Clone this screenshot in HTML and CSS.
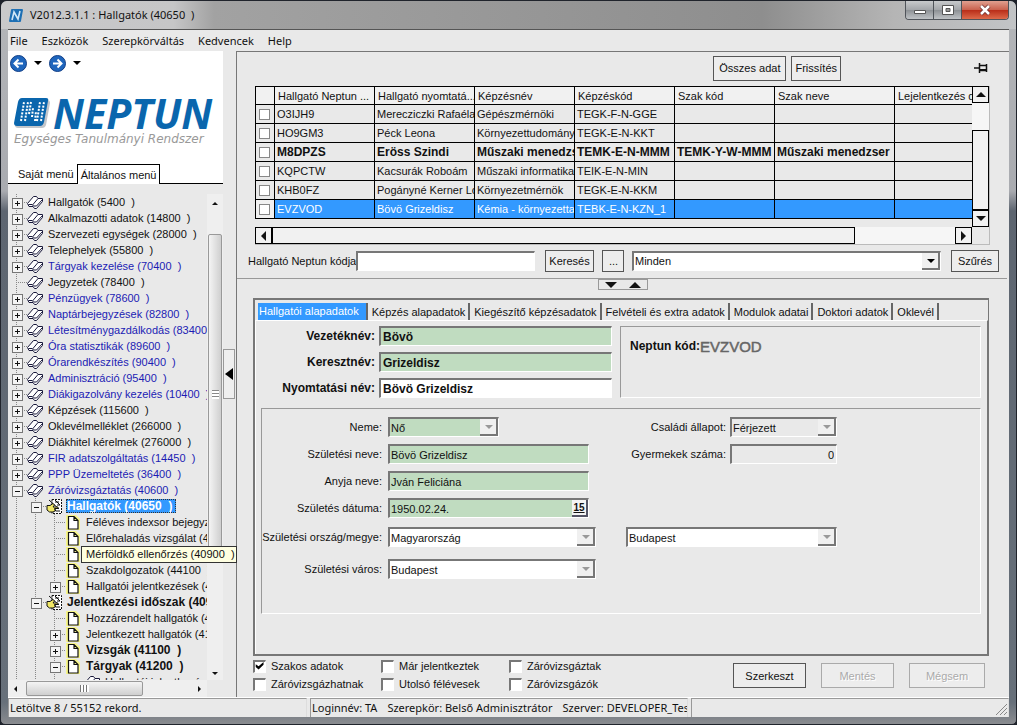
FILE: index.html
```
<!DOCTYPE html>
<html lang="hu">
<head>
<meta charset="utf-8">
<title>V2012.3.1.1 : Hallgatók (40650 )</title>
<link rel="stylesheet" href="styles.css">
</head>
<body>
<svg class="defs" aria-hidden="true">
  <symbol id="book" viewBox="0 0 17 15"><path d="M.5 8.500 6.500 1.500h3.500l1.500 1.500h4.500v3.500L10 13.500H7L5.500 12H2z" fill="#fff"/><path d="M.5 8.500 6.500 1.500h3l1.500 2h4.500v3L9.500 13.500h-2L6 11.500H2zM11 3.500 5.500 10M1.500 9.500H5l1.500 1.500h3L15.500 4.500" fill="none" stroke="#18183a"/></symbol>
  <symbol id="page" viewBox="0 0 17 15"><path d="M1 0h10l4 4v11H1z" fill="#f7f58a"/><path d="M3.500 1.500h5.500l4 4v8.500h-9.500zM9 1.500v4h4" fill="#fff" stroke="#111" stroke-width="1.200"/></symbol>
  <symbol id="hand" viewBox="0 0 17 15"><path d="M6 .5h9.500v14H6z" fill="#fff" stroke="#111" stroke-dasharray="2 1"/><path d="M3 1l10 9M9 3h4M11 6h3M10 12h4M9 1l5 5" stroke="#111"/><path d="M1 6.500h3l3-2 1.500 1.500L7 8h5v1.500H8.500v1h1v1.500H8v1H3.500L1 11z" fill="#f1e866" stroke="#111"/></symbol>
</svg>
<div class="window">
  <header class="titlebar">
    <svg class="app-icon" viewBox="0 0 14 13" aria-hidden="true"><path d="M3 0h10q1 0 1 1l-2 11q0 1-1 1H1q-1 0-1-1L2 1q0-1 1-1z" fill="#1d6fb4"/><path d="M3 11 5 3l4 7 2-8" fill="none" stroke="#cfe6f7" stroke-width="1.600"/></svg>
    <h1 class="title">V2012.3.1.1 : Hallgatók (40650&nbsp; )</h1>
    <div class="window-buttons">
      <button type="button" class="wb" aria-label="Kis méret"><svg viewBox="0 0 14 12"><path d="M1.500 6.500h11v3h-11z" fill="#fff" stroke="#555"/></svg></button>
      <button type="button" class="wb" aria-label="Teljes méret"><svg viewBox="0 0 14 12"><path d="M1.500 1.500h11v9h-11z" fill="#fff" stroke="#555"/><path d="M5 4.500h4v3H5z" fill="#999" stroke="#555"/></svg></button>
      <button type="button" class="wb wb-close" aria-label="Bezárás"><svg viewBox="0 0 14 12"><path d="M3 2l8 8M11 2l-8 8" stroke="#6b3030" stroke-width="4"/><path d="M3 2l8 8M11 2l-8 8" stroke="#fff" stroke-width="2.500"/></svg></button>
    </div>
  </header>
  <div class="client">
    <nav class="menubar">
      <button type="button">File</button><button type="button">Eszközök</button><button type="button">Szerepkörváltás</button><button type="button">Kedvencek</button><button type="button">Help</button>
    </nav>
    <div class="workspace">
      <aside class="sidebar">
        <div class="brand">
          <div class="history">
            <button type="button" class="round" aria-label="Vissza"><svg viewBox="0 0 17 17"><circle cx="8.500" cy="8.500" r="8" fill="#1f66bd" stroke="#123f86"/><path d="M13 8.500H5M8.500 4.500l-4 4 4 4" fill="none" stroke="#fff" stroke-width="2"/></svg></button>
            <span class="caret"></span>
            <button type="button" class="round" aria-label="Előre"><svg viewBox="0 0 17 17"><circle cx="8.500" cy="8.500" r="8" fill="#1f66bd" stroke="#123f86"/><path d="M4 8.500h8M8.500 4.500l4 4-4 4" fill="none" stroke="#fff" stroke-width="2"/></svg></button>
            <span class="caret"></span>
          </div>
          <div class="logo">
            <svg viewBox="0 0 36 32" aria-hidden="true"><path d="M9 3h24q3 0 3 3l-4 22q-1 3-4 3H4q-3 0-3-3L5 6q1-3 4-3z" fill="#c3c6ca"/><path d="M8 1h24q3 0 2 3l-4 21q-1 4-4 4H3q-3 0-3-3L4 5q1-4 4-4z" fill="#0a66ad"/><path d="M7 24l3-19M11 24l3-19M15 17l2-12M18 20l1-9M21 24l1-10M23 24l3-19M27 24l3-19" stroke="#fff" stroke-width="2" stroke-dasharray="2 1.400"/></svg>
            <span class="logo-name">NEPTUN</span>
          </div>
          <div class="logo-sub">Egységes Tanulmányi Rendszer</div>
          <div class="menu-tabs"><button type="button">Saját menü</button><button type="button" class="active">Általános menü</button></div>
        </div>
        <div class="tree-area">
          <ul class="tree">
            <li><i class="g plus"></i><svg><use href="#book"/></svg><span>Hallgatók (5400  )</span></li>
            <li><i class="g plus"></i><svg><use href="#book"/></svg><span>Alkalmazotti adatok (14800  )</span></li>
            <li><i class="g plus"></i><svg><use href="#book"/></svg><span>Szervezeti egységek (28000  )</span></li>
            <li><i class="g plus"></i><svg><use href="#book"/></svg><span>Telephelyek (55800  )</span></li>
            <li class="blue"><i class="g plus"></i><svg><use href="#book"/></svg><span>Tárgyak kezelése (70400  )</span></li>
            <li><i class="g leaf"></i><svg><use href="#book"/></svg><span>Jegyzetek (78400  )</span></li>
            <li class="blue"><i class="g plus"></i><svg><use href="#book"/></svg><span>Pénzügyek (78600  )</span></li>
            <li class="blue"><i class="g plus"></i><svg><use href="#book"/></svg><span>Naptárbejegyzések (82800  )</span></li>
            <li class="blue"><i class="g plus"></i><svg><use href="#book"/></svg><span>Létesítménygazdálkodás (83400</span></li>
            <li class="blue"><i class="g plus"></i><svg><use href="#book"/></svg><span>Óra statisztikák (89600  )</span></li>
            <li class="blue"><i class="g plus"></i><svg><use href="#book"/></svg><span>Órarendkészítés (90400  )</span></li>
            <li class="blue"><i class="g plus"></i><svg><use href="#book"/></svg><span>Adminisztráció (95400  )</span></li>
            <li class="blue"><i class="g plus"></i><svg><use href="#book"/></svg><span>Diákigazolvány kezelés (10400  )</span></li>
            <li><i class="g plus"></i><svg><use href="#book"/></svg><span>Képzések (115600  )</span></li>
            <li><i class="g plus"></i><svg><use href="#book"/></svg><span>Oklevélmelléklet (266000  )</span></li>
            <li><i class="g plus"></i><svg><use href="#book"/></svg><span>Diákhitel kérelmek (276000  )</span></li>
            <li class="blue"><i class="g plus"></i><svg><use href="#book"/></svg><span>FIR adatszolgáltatás (14450  )</span></li>
            <li class="blue"><i class="g plus"></i><svg><use href="#book"/></svg><span>PPP Üzemeltetés (36400  )</span></li>
            <li class="blue"><i class="g minus"></i><svg><use href="#book"/></svg><span>Záróvizsgáztatás (40600  )</span></li>
            <li class="bold selected"><i class="g"></i><i class="g minus"></i><svg><use href="#hand"/></svg><span>Hallgatók (40650  )</span></li>
            <li><i class="g"></i><i class="g"></i><i class="g leaf"></i><svg><use href="#page"/></svg><span>Féléves indexsor bejegyzések</span></li>
            <li><i class="g"></i><i class="g"></i><i class="g leaf"></i><svg><use href="#page"/></svg><span>Előrehaladás vizsgálat (40800  )</span></li>
            <li><i class="g"></i><i class="g"></i><i class="g leaf"></i><svg><use href="#page"/></svg></li>
            <li><i class="g"></i><i class="g"></i><i class="g leaf"></i><svg><use href="#page"/></svg><span>Szakdolgozatok (44100  )</span></li>
            <li><i class="g"></i><i class="g"></i><i class="g plus"></i><svg><use href="#page"/></svg><span>Hallgatói jelentkezések (41000  )</span></li>
            <li class="bold"><i class="g"></i><i class="g minus"></i><svg><use href="#hand"/></svg><span>Jelentkezési időszak (40950  )</span></li>
            <li><i class="g"></i><i class="g"></i><i class="g leaf"></i><svg><use href="#page"/></svg><span>Hozzárendelt hallgatók (41000  )</span></li>
            <li><i class="g"></i><i class="g"></i><i class="g plus"></i><svg><use href="#page"/></svg><span>Jelentkezett hallgatók (41050  )</span></li>
            <li class="bold"><i class="g"></i><i class="g"></i><i class="g plus"></i><svg><use href="#page"/></svg><span>Vizsgák (41100  )</span></li>
            <li class="bold"><i class="g"></i><i class="g"></i><i class="g minus"></i><svg><use href="#page"/></svg><span>Tárgyak (41200  )</span></li>
            <li><i class="g"></i><i class="g"></i><i class="g"></i><i class="g none"></i><svg><use href="#book"/></svg><span>Hallgatói jelentkezések</span></li>
          </ul>
          <div class="vbar"><span class="tri up"></span><span class="thumb"></span><span class="tri down"></span></div>
          <div class="hbar"><span class="tri left"></span><span class="thumb"></span><span class="tri right"></span></div>
        </div>
        <div class="tooltip" role="tooltip">Mérföldkő ellenőrzés (40900  )</div>
      </aside>
      <div class="splitter"><button type="button" aria-label="Menü elrejtése"><span></span></button></div>
      <main class="main">
        <section class="list-pane">
          <div class="toolbar">
            <button type="button" class="btn">Összes adat</button>
            <button type="button" class="btn">Frissítés</button>
            <svg class="pin" viewBox="0 0 14 10" aria-hidden="true"><path d="M0 5h5M5.500 0v10M6 2.500h6M6 7.500h6M12.500 1v8" fill="none" stroke="#111" stroke-width="1.500"/><path d="M6 6h6v2H6z" fill="#111"/></svg>
          </div>
          <div class="grid">
            <div class="grid-view">
              <table>
                <colgroup><col class="c-check"><col class="c"><col class="c"><col class="c"><col class="c"><col class="c"><col class="c-wide"><col class="c"></colgroup>
                <thead><tr><th></th><th>Hallgató Neptun ...</th><th>Hallgató nyomtatá...</th><th>Képzésnév</th><th>Képzéskód</th><th>Szak kód</th><th>Szak neve</th><th>Lejelentkezés dátuma</th></tr></thead>
                <tbody>
                  <tr><td><input type="checkbox" aria-label="O3IJH9"></td><td>O3IJH9</td><td>Merecziczki Rafaéla</td><td>Gépészmérnöki</td><td>TEGK-F-N-GGE</td><td></td><td></td><td></td></tr>
                  <tr><td><input type="checkbox" aria-label="HO9GM3"></td><td>HO9GM3</td><td>Péck Leona</td><td>Környezettudományi</td><td>TEGK-E-N-KKT</td><td></td><td></td><td></td></tr>
                  <tr class="bold"><td><input type="checkbox" aria-label="M8DPZS"></td><td>M8DPZS</td><td>Eröss Szindi</td><td>Műszaki menedzser</td><td>TEMK-E-N-MMM</td><td>TEMK-Y-W-MMM</td><td>Műszaki menedzser</td><td></td></tr>
                  <tr><td><input type="checkbox" aria-label="KQPCTW"></td><td>KQPCTW</td><td>Kacsurák Roboám</td><td>Műszaki informatika</td><td>TEIK-E-N-MIN</td><td></td><td></td><td></td></tr>
                  <tr><td><input type="checkbox" aria-label="KHB0FZ"></td><td>KHB0FZ</td><td>Pogányné Kerner Lori</td><td>Környezetmérnök</td><td>TEGK-E-N-KKM</td><td></td><td></td><td></td></tr>
                  <tr class="current"><td><input type="checkbox" aria-label="EVZVOD"></td><td>EVZVOD</td><td>Bövö Grizeldisz</td><td>Kémia - környezettan</td><td>TEBK-E-N-KZN_1</td><td></td><td></td><td></td></tr>
                </tbody>
              </table>
            </div>
            <div class="gvbar"><span class="cell"><span class="tri up"></span></span><span class="cell knob"></span><span class="cell"><span class="tri down"></span></span></div>
            <div class="ghbar"><span class="cell"><span class="tri left"></span></span><span class="cell knob"></span><span class="cell"><span class="tri right"></span></span></div>
          </div>
          <div class="filter">
            <label for="code">Hallgató Neptun kódja</label><input id="code" class="field" type="text">
            <button type="button" class="btn search">Keresés</button>
            <button type="button" class="btn dots">...</button>
            <span class="select wide"><select aria-label="Szűrő"><option>Minden</option></select></span>
            <button type="button" class="btn apply">Szűrés</button>
          </div>
        </section>
        <div class="pane-toggle"><button type="button" aria-label="Lista és részletek méretezése"><span class="tri down"></span><span class="tri up"></span></button></div>
        <section class="details">
          <div class="tabs" role="tablist">
            <button type="button" role="tab" aria-selected="true">Hallgatói alapadatok</button><button type="button" role="tab">Képzés alapadatok</button><button type="button" role="tab">Kiegészítő képzésadatok</button><button type="button" role="tab">Felvételi és extra adatok</button><button type="button" role="tab">Modulok adatai</button><button type="button" role="tab">Doktori adatok</button><button type="button" role="tab">Oklevél</button>
          </div>
          <div class="sheet">
            <div class="names">
              <div class="name-form">
                <label for="ln">Vezetéknév:</label><input id="ln" class="field green" type="text" value="Bövö">
                <label for="fn">Keresztnév:</label><input id="fn" class="field green" type="text" value="Grizeldisz">
                <label for="pn">Nyomtatási név:</label><input id="pn" class="field" type="text" value="Bövö Grizeldisz">
              </div>
              <div class="group code"><span>Neptun kód:</span><output>EVZVOD</output></div>
            </div>
            <div class="group personal">
              <div class="rows left-rows">
                <label for="sex">Neme:</label><span class="select green short off"><select id="sex"><option>Nő</option></select></span>
                <label for="bn">Születési neve:</label><input id="bn" class="field green" type="text" value="Bövö Grizeldisz">
                <label for="mn">Anyja neve:</label><input id="mn" class="field green" type="text" value="Jván Feliciána">
                <label for="bd">Születés dátuma:</label><span class="date"><input id="bd" type="text" value="1950.02.24."><button type="button">15</button></span>
                <label for="co">Születési ország/megye:</label><span class="select off"><select id="co"><option>Magyarország</option></select></span>
                <label for="ci">Születési város:</label><span class="select off"><select id="ci"><option>Budapest</option></select></span>
              </div>
              <div class="rows right-rows">
                <label for="ms">Családi állapot:</label><span class="select plain off"><select id="ms"><option>Férjezett</option></select></span>
                <label for="ch">Gyermekek száma:</label><input id="ch" class="field plain num" type="text" value="0">
                <span class="select off county"><select aria-label="Megye"><option>Budapest</option></select></span>
              </div>
            </div>
          </div>
        </section>
        <footer class="actions">
          <div class="checks">
            <label><input type="checkbox" checked>Szakos adatok</label><label><input type="checkbox">Már jelentkeztek</label><label><input type="checkbox">Záróvizsgáztak</label>
            <label><input type="checkbox">Záróvizsgázhatnak</label><label><input type="checkbox">Utolsó félévesek</label><label><input type="checkbox">Záróvizsgázók</label>
          </div>
          <div class="commands"><button type="button" class="btn">Szerkeszt</button><button type="button" class="btn" disabled>Mentés</button><button type="button" class="btn" disabled>Mégsem</button></div>
        </footer>
      </main>
    </div>
    <footer class="status">
      <div>Letöltve 8 / 55152 rekord.</div>
      <div><span>Loginnév: TA</span><span>Szerepkör: Belső Adminisztrátor</span><span>Szerver: DEVELOPER_Teszt</span></div>
      <div><svg viewBox="0 0 12 12" aria-hidden="true"><path d="M1 12 12 1M5 12l7-7M9 12l3-3" stroke="#888" fill="none"/></svg></div>
    </footer>
  </div>
</div>
</body>
</html>
```
FILE: styles.css
```
* { box-sizing: border-box; }
body { margin: 0; background: #1c2029; color: #111; font: 11px/14px "Liberation Sans", Arial, sans-serif; }
button, input, select { font: inherit; color: inherit; margin: 0; padding: 0; border: 0; border-radius: 0; background: none; }
.defs { position: absolute; width: 0; height: 0; }

.window {
  height: 100vh; display: flex; flex-direction: column;
  padding: 0 7px 7px; overflow: hidden;
  border: 1px solid #20242c; border-radius: 7px 7px 5px 5px;
  background: linear-gradient(#b4b6b9 0, #a9abb0 190px, #5d6570 210px, #67707a 97%, #8a8c90 100%);
}
.titlebar {
  flex: none; height: 28px; display: flex; align-items: center; margin: 0 -7px; padding: 0 7px 0 8px;
  border-radius: 6px 6px 0 0;
  background: linear-gradient(90deg, #c9c9ca 0, #c6c6c7 17%, #a2a2a2 21%, #999 45%, #8e8e8e 75%, #b5b5b5 88%, #c2c4c6 100%);
}
.app-icon { width: 14px; height: 13px; }
.title { margin: 0 0 0 7px; font: 11px/16px "Noto Sans", "Open Sans", sans-serif; flex: 1; }
.window-buttons { display: flex; align-self: flex-start; border: 1px solid #50545a; border-top: 0; border-radius: 0 0 4px 4px; overflow: hidden; }
.wb { width: 28px; height: 18px; background: linear-gradient(#c8cacc, #a2a5a9 50%, #8c9094 50%, #bfc2c5); border-right: 1px solid #50545a; }
.wb svg { display: block; width: 14px; height: 12px; margin: 0 auto; }
.wb-close { width: 46px; border-right: 0; background: linear-gradient(#e0a090, #c9604c 50%, #b82c18 50%, #dd6a4a); }

.client { flex: 1; min-height: 0; display: flex; flex-direction: column; background: #e9e9e9; border-top: 1px solid #555; }
.menubar { flex: none; display: flex; gap: 14px; height: 21px; padding-left: 2px; align-items: center; font: 11px/16px "Noto Sans", "Open Sans", sans-serif; }
.workspace { flex: 1; min-height: 0; display: flex; }

.sidebar { position: relative; width: 215px; flex: none; display: flex; flex-direction: column; }
.brand { flex: none; background: #fff; }
.history { display: flex; align-items: center; height: 24px; padding-left: 2px; gap: 7px; }
.round { width: 17px; height: 17px; }
.round svg { display: block; }
.caret { border: 4px solid transparent; border-top-color: #000; border-bottom: 0; }
.logo { display: flex; align-items: center; height: 34px; margin-top: 21px; padding-left: 6px; gap: 3px; }
.logo svg { width: 36px; height: 32px; }
.logo-name { font: italic bold 41px/34px "Open Sans", sans-serif; color: #0a66ad; }
.logo-sub { padding-left: 6px; font: italic 12px/18px "DejaVu Sans", sans-serif; color: #999; white-space: nowrap; }
.menu-tabs { display: flex; height: 36px; padding: 16px 0 0 2px; align-items: stretch; border-bottom: 1px solid #000; }
.menu-tabs button { padding: 0 3px 0 8px; }
.menu-tabs .active { border: 1px solid #000; border-bottom: 0; padding: 0 3px; margin-bottom: -1px; background: #fff; }
.tree-area { flex: 1; min-height: 0; padding-top: 10px; display: grid; grid-template: minmax(0, 1fr) 17px / minmax(0, 1fr) 16px; }
.tree { margin: 0; padding: 0; list-style: none; overflow: hidden; }
.tree li { display: flex; height: 16px; align-items: center; white-space: pre; }
.tree svg { flex: none; width: 17px; height: 15px; margin-right: 3px; }
.tree span { line-height: 14px; padding: 0 1px; }
.tree .blue { color: #1c1cb4; }
.tree .bold, tr.bold td, .name-form, .code { font: bold 12px/14px "Liberation Sans", Arial, sans-serif; }
.selected span { background: #39f; color: #fff; outline: 1px dotted #333; outline-offset: -1px; }
.tree .selected span { padding-right: 4px; }
.g { flex: none; position: relative; width: 19px; height: 16px; background: repeating-linear-gradient(#888 0 1px, transparent 1px 2px) 8px 0 / 1px 100% no-repeat; }
.g.none { background: none; }
.plus, .minus, .leaf { background: repeating-linear-gradient(#888 0 1px, transparent 1px 2px) 8px 0 / 1px 100% no-repeat, repeating-linear-gradient(90deg, #888 0 1px, transparent 1px 2px) 8px 8px / 11px 1px no-repeat; }
.plus::before, .minus::before { content: ""; position: absolute; left: 4px; top: 4px; width: 9px; height: 9px; border: 1px solid #777; background: linear-gradient(#111, #111) center / 5px 1px no-repeat, #f4f4f4; }
.plus::before { background: linear-gradient(#111, #111) center / 5px 1px no-repeat, linear-gradient(#111, #111) center / 1px 5px no-repeat, #f4f4f4; }

.tri { width: 0; height: 0; border: 4px solid transparent; }
.tri.up { border-bottom-color: #111; border-top: 0; }
.tri.down { border-top-color: #111; border-bottom: 0; }
.tri.left { border-right-color: #111; border-left: 0; }
.tri.right { border-left-color: #111; border-right: 0; }
.vbar { display: flex; flex-direction: column; align-items: center; justify-content: space-between; padding: 8px 0 5px; background: #efefef; }
.vbar .tri, .hbar .tri { border-width: 3px; }
.vbar .tri.up { border-top: 0; }
.vbar .tri.down { border-bottom: 0; }
.vbar .thumb { width: 14px; height: 68%; margin-bottom: 88px; border: 1px solid #999; border-radius: 2px; background: repeating-linear-gradient(#888 0 1px, #fff 1px 3px) center / 7px 9px no-repeat, linear-gradient(90deg, #f4f4f4, #cfcfcf); }
.hbar { grid-column: 1; display: flex; align-items: center; padding: 0 6px; background: #efefef; }
.hbar .tri.left { border-left: 0; }
.hbar .tri.right { border-right: 0; margin-left: auto; }
.hbar .thumb { width: 117px; height: 15px; margin-left: 9px; border: 1px solid #999; border-radius: 2px; background: repeating-linear-gradient(90deg, #777 0 1px, #fff 1px 3px) center / 9px 7px no-repeat, linear-gradient(#f4f4f4, #cfcfcf); }
.tooltip { position: absolute; left: 73px; top: 495px; height: 17px; padding: 0 1px 0 4px; border: 1px solid #333; background: #ffffe1; line-height: 15px; white-space: pre; }

.splitter { width: 13px; flex: none; display: flex; align-items: center; }
.splitter button { width: 12px; height: 50px; border: 1px solid #999; background: #efefef; display: flex; align-items: center; justify-content: center; }
.splitter span { border: 6px solid transparent; border-right: 8px solid #000; border-left: 0; }

.main { flex: 1; min-width: 0; display: flex; flex-direction: column; border: 1px solid #777; border-width: 1px 0 0 1px; }
.list-pane { flex: none; margin-right: 2px; border-bottom: 1px solid #999; padding-bottom: 6px; }
.toolbar { display: flex; align-items: center; justify-content: flex-end; gap: 5px; height: 34px; padding: 0 19px 2px 0; }
.btn { height: 22px; padding: 0 6px; border: 1px solid #555; background: #ededed; white-space: nowrap; }
.btn:disabled { color: #aaa; border-color: #aaa; text-shadow: 1px 1px #fff; }
.toolbar .btn { height: 25px; padding: 0 3px; }
.toolbar .btn:first-child { padding: 0 5px; }
.pin { width: 14px; height: 10px; margin-left: 128px; }
.grid { margin: 0 17px 0 18px; display: grid; grid-template: 141px 17px / minmax(0, 1fr) 17px; border-right: 1px solid #bbb; border-bottom: 1px solid #bbb; }
.grid-view { overflow: hidden; }
table { table-layout: fixed; border-collapse: collapse; width: 740px; margin-bottom: 8px; }
.c { width: 100px; }
.c-check { width: 19px; }
.c-wide { width: 120px; }
th, td { height: 19px; padding: 0 0 0 2px; border: 1px solid #000; text-align: left; font-weight: normal; white-space: nowrap; overflow: hidden; line-height: 14px; }
th { height: 18px; padding-left: 3px; background: #f1f1f1; }
.current td { background: #39f; color: #fff; }
.current td:first-child { background: #f1f1f1; }
td input { appearance: none; display: block; width: 11px; height: 11px; margin-left: 1px; border: 1px solid #888; background: #fff; }
.cell { display: flex; align-items: center; justify-content: center; border: 1px solid #000; background: #f1f1f1; flex: none; }
.gvbar { display: flex; flex-direction: column; background: #f6f6f6; }
.gvbar .cell { height: 17px; }
.gvbar .knob { flex: 1; margin-top: 27px; }
.ghbar { display: flex; background: #f6f6f6; }
.ghbar .cell { width: 17px; }
.ghbar .knob { flex: 1; margin-right: 100px; }
.gvbar .tri, .ghbar .tri { border-width: 5px; }
.gvbar .up { border-top: 0; }
.gvbar .down { border-bottom: 0; }
.ghbar .left { border-left: 0; }
.ghbar .right { border-right: 0; }

.filter { display: flex; align-items: center; padding: 4px 8px 0 11px; height: 27px; }
.filter label { width: 108px; white-space: nowrap; }
.field { height: 20px; padding: 0 2px; border: 1px solid #fff; border-top: 2px solid #777; border-left: 2px solid #777; background: #fff; min-width: 0; }
.filter .field { width: 179px; margin-right: 10px; }
.filter .search { width: 49px; margin-right: 8px; padding: 0; }
.dots { width: 22px; margin-right: 8px; }
.filter .apply { width: 48px; padding: 0; }
.select { position: relative; display: block; height: 20px; border: 1px solid #fff; border-top: 2px solid #777; border-left: 2px solid #777; background: #fff; }
.select select { appearance: none; display: block; width: 100%; height: 100%; padding: 0 18px 0 1px; }
.select::before { content: ""; position: absolute; right: 0; top: 0; bottom: 0; width: 16px; background: #f0f0f0; border: 1px solid #777; border-width: 0 2px 2px 0; pointer-events: none; }
.select::after { content: ""; position: absolute; right: 5px; top: 6px; border: 4px solid transparent; border-top-color: #000; border-bottom: 0; pointer-events: none; }
.off::after { border-top-color: #999; }
.wide { flex: 1; margin-right: 10px; }
.green, .date { background: #c0dcc0; }
.plain { background: #e9e9e9; }
.num { text-align: right; }

.pane-toggle { flex: none; display: flex; justify-content: center; height: 19px; }
.pane-toggle button { width: 50px; height: 11px; border: 1px solid #999; display: flex; justify-content: center; align-items: center; gap: 12px; }
.pane-toggle .tri { border-width: 6px; }
.pane-toggle .up { border-top: 0; }
.pane-toggle .down { border-bottom: 0; }

.details { flex: 1; min-height: 0; margin: 0 20px 0 16px; border: 2px solid #777; border-right-width: 1px; display: flex; flex-direction: column; }
.tabs { display: flex; padding: 3px 0 0 3px; height: 20px; }
.tabs button { height: 17px; padding: 0 3px 0 4px; border-right: 2px solid #666; white-space: nowrap; }
.tabs [aria-selected="true"] { background: #39f; color: #fff; padding: 0 7px 2px 1px; }
.sheet { flex: 1; min-height: 0; display: flex; flex-direction: column; padding: 5px 6px 40px 5px; border: 1px solid #fff; border-right: 1px solid #777; border-bottom: 0; }
.names { display: flex; height: 72px; margin-bottom: 10px; }
.name-form { display: grid; grid-template-columns: 114px 233px; grid-auto-rows: 20px; gap: 6px 4px; align-items: center; text-align: right; margin-right: 8px; }
.group { border: 1px solid #999; border-right-color: #fff; border-bottom-color: #fff; }
.code { flex: 1; padding: 10px 9px; display: flex; align-items: flex-start; line-height: 18px; }
.code output { font-weight: normal; font-size: 15px; line-height: 20px; color: #666; -webkit-text-stroke: 0.5px #666; }
.personal { flex: 1; display: flex; padding-top: 8px; gap: 30px; }
.rows { display: grid; align-items: start; align-content: start; text-align: right; }
.rows label { line-height: 20px; white-space: nowrap; }
.left-rows { grid-template: 27px 27px 27px 29px 32px 20px / 120px 208px; column-gap: 6px; }
.right-rows { grid-template: 27px 27px 56px 20px / 100px 107px; column-gap: 4px; }
.county { grid-row: 4; grid-column: 1 / 3; text-align: left; }
.rows .select { text-align: left; }
.left-rows .field, .date { width: 201px; }
.left-rows .field { padding: 0 1px; }
.short { width: 111px; }
.date { display: flex; height: 20px; border: 1px solid #fff; border-top: 2px solid #777; border-left: 2px solid #777; }
.date input { flex: 1; min-width: 0; padding: 0 1px; }
.date button { width: 16px; background: #f4f4f4; border: 1px solid #556; border-width: 0 2px 2px 0; font-size: 10px; line-height: 12px; font-weight: bold; text-decoration: underline; }

.actions { flex: none; display: flex; justify-content: space-between; height: 41px; padding: 0 24px 0 16px; }
.checks { display: grid; grid-template-columns: 128px 128px 110px; grid-auto-rows: 18px; padding-top: 1px; }
.checks label { display: flex; align-items: center; gap: 5px; white-space: nowrap; }
.checks input { appearance: none; width: 13px; height: 13px; border: 1px solid #fff; border-top: 2px solid #777; border-left: 2px solid #777; background: #fff; }
.checks input:checked::after { content: ""; display: block; width: 9px; height: 8px; background: #000; clip-path: polygon(8% 35%, 40% 60%, 95% 5%, 95% 40%, 40% 100%, 8% 70%); }
.commands { display: flex; gap: 15px; padding-top: 7px; }
.commands .btn { width: 73px; height: 25px; }
.commands .btn:last-child { width: 76px; }

.status { flex: none; display: grid; grid-template-columns: 3fr 378px 318px; gap: 3px; height: 20px; border-top: 1px solid #fff; font: 11px/17px "Noto Sans", "Open Sans", sans-serif; }
.status div { border: 1px solid #999; border-width: 1px 1px 0 1px; border-right-color: #ddd; padding: 0 1px; display: flex; gap: 10px; white-space: nowrap; overflow: hidden; min-width: 0; }
.status svg { width: 12px; height: 12px; margin: 4px 0 0 auto; }
```
